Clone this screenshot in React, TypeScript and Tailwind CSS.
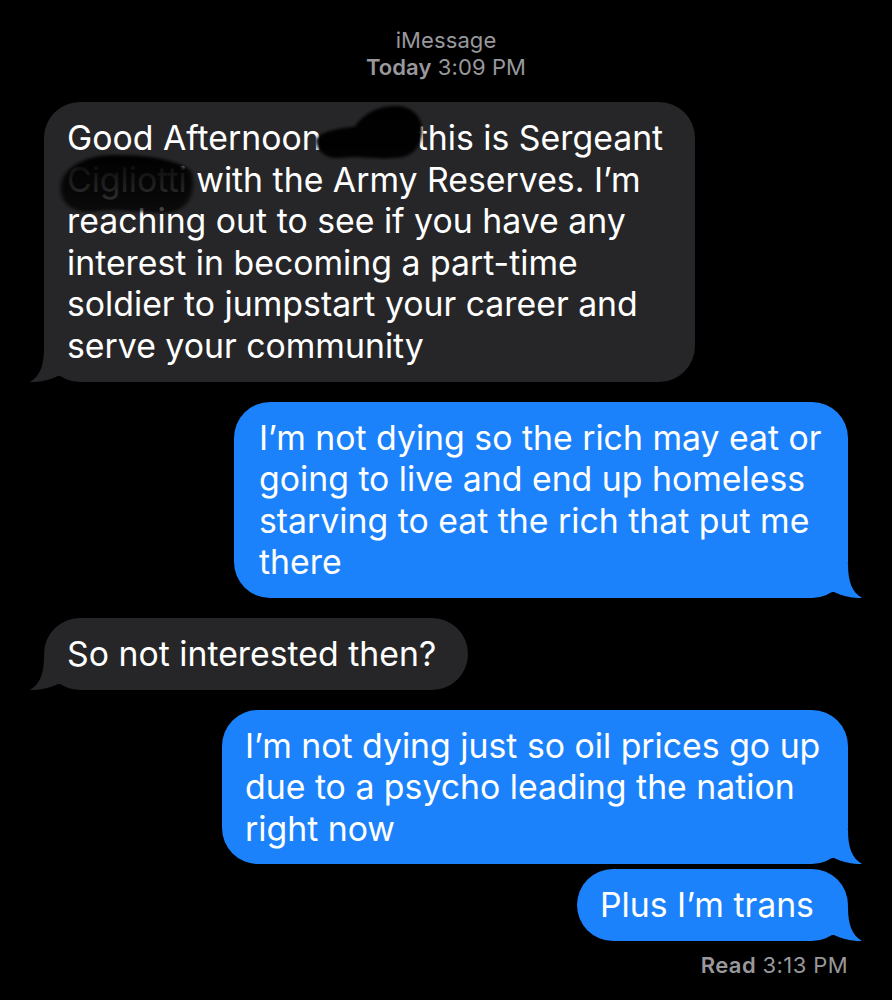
import React from "react";

type Side = "left" | "right";

const Tail: React.FC<{ side: Side; color: string }> = ({ side, color }) => (
  <svg
    width="44"
    height="34"
    viewBox="0 0 44 34"
    className={
      side === "left"
        ? "absolute bottom-0 left-[-14px]"
        : "absolute bottom-0 right-[-14px] -scale-x-100"
    }
  >
    <path
      d="M14 0 C14 18 10 28 0 34 C10 34.5 20 32 28 28 L44 28 L44 0 Z"
      fill={color}
    />
  </svg>
);

const Bubble: React.FC<{
  side: Side;
  width: string;
  lines: React.ReactNode[];
  className?: string;
  children?: React.ReactNode;
}> = ({ side, width, lines, className = "", children }) => {
  const color = side === "left" ? "#262628" : "#1b82fb";
  return (
    <div
      className={`relative ${width} ${
        side === "left" ? "self-start ml-[44px] bg-[#262628]" : "self-end mr-[44px] bg-[#1b82fb]"
      } rounded-[36px] pl-[23px] pt-[15px] pb-[15px] text-white ${className}`}
    >
      <Tail side={side} color={color} />
      <div className="relative text-[33.8px] leading-[41.6px]">
        {lines.map((l, i) => (
          <div key={i} className="whitespace-nowrap">
            {l}
          </div>
        ))}
      </div>
      {children}
    </div>
  );
};

// marker smudges that hide the names
const Smudge: React.FC<{ id: string; d: string; className: string; fade?: boolean }> = ({
  id,
  d,
  className,
  fade,
}) => (
  <svg viewBox="0 0 100 50" preserveAspectRatio="none" className={className}>
    <defs>
      <filter id={`blur-${id}`} x="-20%" y="-20%" width="140%" height="140%">
        <feGaussianBlur stdDeviation="1.4" />
      </filter>
      <linearGradient id={`grad-${id}`} x1="0" y1="0" x2="0" y2="1">
        <stop offset="0" stopColor="#050505" stopOpacity={fade ? 0.98 : 1} />
        <stop offset="1" stopColor="#050505" stopOpacity={fade ? 0.72 : 0.95} />
      </linearGradient>
    </defs>
    <path d={d} fill={`url(#grad-${id})`} filter={`url(#blur-${id})`} />
  </svg>
);

export default function App() {
  return (
    <div className="w-[892px] h-[1000px] overflow-hidden bg-black font-['Inter','Roboto','Liberation_Sans',sans-serif]">
      {/* HEADER */}
      <div className="pt-[27px] text-center text-[22px] leading-[27px] tracking-[0.1px] text-[#98989d]">
        <div>iMessage</div>
        <div>
          <span className="font-semibold">Today</span> 3:09 PM
        </div>
      </div>

      {/* MESSAGES */}
      <div className="flex flex-col mt-[21px]">
        <Bubble
          side="left"
          width="w-[651px]"
          lines={[
            <>
              Good Afternoon
              <span className="inline-block w-[95px]" />
              this is Sergeant
            </>,
            <>
              <span className="text-[#c8c8cc]">Cigliotti</span> with the Army Reserves. I’m
            </>,
            "reaching out to see if you have any",
            "interest in becoming a part-time",
            "soldier to jumpstart your career and",
            "serve your community",
          ]}
        >
          <Smudge
            id="a"
            className="absolute left-[272px] top-[2px] w-[108px] h-[56px]"
            d="M0 32 C4 24 20 22 36 20 C44 8 60 0 78 2 C92 4 100 14 98 28 C96 40 88 48 74 48 C56 50 40 46 24 48 C10 50 0 42 0 32 Z"
          />
          <Smudge
            id="b"
            fade
            className="absolute left-[14px] top-[48px] w-[138px] h-[64px]"
            d="M2 30 C2 14 20 4 40 4 C60 4 84 6 96 16 C100 26 98 44 84 48 C66 52 46 44 28 48 C14 50 2 44 2 30 Z"
          />
        </Bubble>

        <Bubble
          side="right"
          width="w-[614px]"
          className="mt-[20px] pl-[25px]"
          lines={[
            "I’m not dying so the rich may eat or",
            "going to live and end up homeless",
            "starving to eat the rich that put me",
            "there",
          ]}
        />

        <Bubble
          side="left"
          width="w-[424px]"
          className="mt-[20px]"
          lines={["So not interested then?"]}
        />

        <Bubble
          side="right"
          width="w-[626px]"
          className="mt-[20px]"
          lines={[
            "I’m not dying just so oil prices go up",
            "due to a psycho leading the nation",
            "right now",
          ]}
        />

        <Bubble
          side="right"
          width="w-[271px]"
          className="mt-[5px]"
          lines={["Plus I’m trans"]}
        />

        <div className="self-end mr-[44px] mt-[11px] text-[22px] leading-[27px] tracking-[0.4px] text-[#98989d]">
          <span className="font-semibold">Read</span> 3:13 PM
        </div>
      </div>
    </div>
  );
}
